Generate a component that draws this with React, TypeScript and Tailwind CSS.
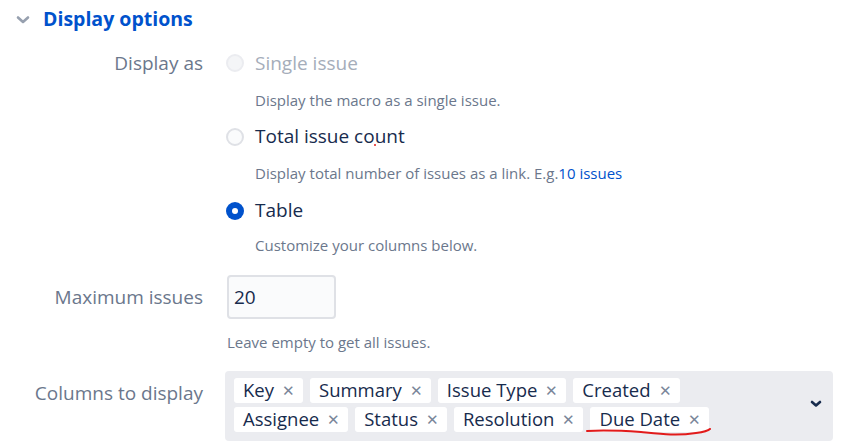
import React from 'react';

const font = { fontFamily: '"Open Sans", "Noto Sans", sans-serif' };

const Radio = ({ state }: { state: 'disabled' | 'off' | 'on' }) => {
  if (state === 'on') {
    return (
      <span className="flex h-[18px] w-[18px] items-center justify-center rounded-full bg-[#0052cc]">
        <span className="h-[6px] w-[6px] rounded-full bg-white" />
      </span>
    );
  }
  return (
    <span
      className={
        state === 'disabled'
          ? 'h-[18px] w-[18px] rounded-full border-2 border-[#ebecf0] bg-[#f4f5f7]'
          : 'h-[18px] w-[18px] rounded-full border-2 border-[#dfe1e6] bg-[#fafbfc]'
      }
    />
  );
};

const Tag = ({ label, mark }: { label: string; mark?: boolean }) => (
  <div className="relative flex h-[25px] items-center rounded-[3px] bg-white pl-[9px] pr-[8px]">
    <span className="text-[18.5px] leading-none text-[#172b4d]">{label}</span>
    <span className="ml-[8px] text-[15px] leading-none text-[#7a869a]">✕</span>
    {mark && (
      <svg className="absolute left-[-4px] top-[21px]" width="126" height="10" viewBox="0 0 126 10">
        <path d="M1 3 C 20 2, 40 3, 55 4 C 75 6, 90 8, 110 5 C 118 4, 122 3, 124 1" fill="none" stroke="#e21b1b" strokeWidth="2" strokeLinecap="round" />
      </svg>
    )}
  </div>
);

export default function App() {
  const columns = ['Key', 'Summary', 'Issue Type', 'Created', 'Assignee', 'Status', 'Resolution', 'Due Date'];

  return (
    <div className="relative h-[447px] w-[868px] bg-white" style={font}>
      {/* Header */}
      <div className="flex h-[38px] items-center pl-[16px]">
        <svg width="14" height="10" viewBox="0 0 14 10" className="mt-[1px]">
          <path d="M2 2.5 L7 7 L12 2.5" fill="none" stroke="#97a0af" strokeWidth="2.6" strokeLinecap="round" strokeLinejoin="round" />
        </svg>
        <h2 className="ml-[13px] text-[19.5px] font-bold leading-none text-[#0052cc]">Display options</h2>
      </div>

      {/* Display as */}
      <div className="grid grid-cols-[203px_1fr] gap-x-[23px]">
        <div className="flex h-[50px] items-center justify-end pt-[1px] text-[19px] text-[#6b778c]">Display as</div>
        <div className="flex h-[50px] items-center gap-[11px]">
          <Radio state="disabled" />
          <span className="text-[19px] text-[#a5adba]">Single issue</span>
        </div>
        <div />
        <div className="flex h-[24px] items-center pl-[29px] text-[15px] text-[#6b778c]">Display the macro as a single issue.</div>

        <div />
        <div className="relative flex h-[49px] items-center gap-[11px]">
          <Radio state="off" />
          <span className="text-[19px] text-[#172b4d]">Total issue count</span>
          <span className="absolute left-[148px] top-[32px] h-[2px] w-[2px] rounded-full bg-[#e21b1b]" />
        </div>
        <div />
        <div className="flex h-[25px] items-center pl-[29px] text-[15px] text-[#6b778c]">
          Display total number of issues as a link. E.g.<span className="text-[#0052cc]">10 issues</span>
        </div>

        <div />
        <div className="flex h-[49px] items-center gap-[11px]">
          <Radio state="on" />
          <span className="text-[19px] text-[#172b4d]">Table</span>
        </div>
        <div />
        <div className="flex h-[20px] items-center pl-[29px] text-[15px] text-[#6b778c]">Customize your columns below.</div>
      </div>

      {/* Maximum issues */}
      <div className="mt-[20px] grid grid-cols-[203px_1fr] gap-x-[24px]">
        <div className="flex h-[44px] items-center justify-end text-[19px] text-[#6b778c]">Maximum issues</div>
        <div className="flex h-[44px] w-[109px] items-center rounded-[4px] border-2 border-[#dfe1e6] bg-[#fafbfc] pl-[5px] text-[19px] text-[#172b4d]">
          20
        </div>
        <div />
        <div className="flex h-[47px] items-center text-[15px] text-[#6b778c]">Leave empty to get all issues.</div>
      </div>

      {/* Columns to display */}
      <div className="mt-[5px] grid grid-cols-[203px_1fr] gap-x-[22px]">
        <div className="flex h-[44px] items-center justify-end text-[19px] text-[#6b778c]">Columns to display</div>
        <div className="flex h-[70px] w-[608px] items-start justify-between rounded-[4px] bg-[#ebecf0] pl-[9px] pr-[9px] pt-[7px]">
          <div className="flex w-[520px] flex-wrap gap-x-[7px] gap-y-[4px]">
            {columns.map((c) => (
              <Tag key={c} label={c} mark={c === 'Due Date'} />
            ))}
          </div>
          <svg width="12" height="8" viewBox="0 0 12 8" className="mr-[2px] mt-[22px]">
            <path d="M2 2 L6 5.5 L10 2" fill="none" stroke="#172b4d" strokeWidth="2.6" strokeLinecap="round" strokeLinejoin="round" />
          </svg>
        </div>
      </div>
    </div>
  );
}
